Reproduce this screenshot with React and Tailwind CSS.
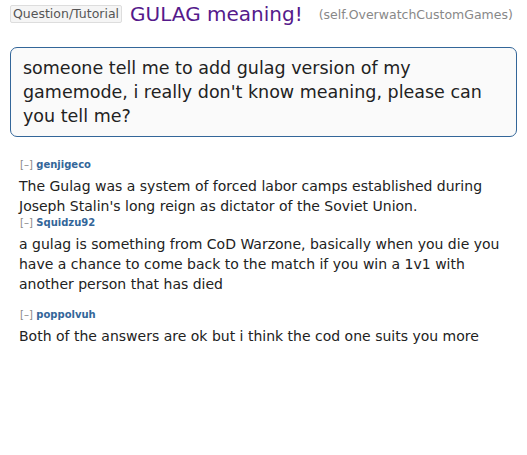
const FONT = { fontFamily: '"DejaVu Sans", Verdana, sans-serif' };

const comments = [
  {
    author: "genjigeco",
    body: "The Gulag was a system of forced labor camps established during Joseph Stalin's long reign as dictator of the Soviet Union.",
    gap: "mb-0",
  },
  {
    author: "Squidzu92",
    body: "a gulag is something from CoD Warzone, basically when you die you have a chance to come back to the match if you win a 1v1 with another person that has died",
    gap: "mb-[14px]",
  },
  {
    author: "poppolvuh",
    body: "Both of the answers are ok but i think the cod one suits you more",
    gap: "mb-0",
  },
];

function Comment({ author, body, gap }) {
  return (
    <div className={`pl-[20px] pr-[24px] ${gap}`}>
      <div className="text-[10px] leading-[14px] font-bold">
        <span className="text-[#888] font-normal">[–]</span>{" "}
        <span className="text-[#369]">{author}</span>
      </div>
      <p className="mt-[4px] text-[14px] leading-[20px] text-[#222] -ml-[1px]">{body}</p>
    </div>
  );
}

export default function App() {
  return (
    <div className="w-[527px] h-[455px] bg-white" style={FONT}>
      <div className="flex items-center pl-[10px] pt-[4px] h-[24px]">
        <span className="text-[12.5px] leading-[14px] px-[2px] py-[1px] border border-[#ddd] bg-[#f5f5f5] text-[#555] rounded-[2px]">
          Question/Tutorial
        </span>
        <span className="ml-[8px] text-[20px] leading-[22px] text-[#551a8b]">GULAG meaning!</span>
        <span className="ml-[16px] mt-[2px] text-[12.5px] text-[#888]">(self.OverwatchCustomGames)</span>
      </div>

      <div className="mx-[10px] mt-[23px] border border-[#369] rounded-[7px] bg-[#fafafa] pl-[12px] pr-[30px] pt-[8px] pb-[8px]">
        <p className="text-[17.5px] leading-[24px] text-[#222]">
          someone tell me to add gulag version of my gamemode, i really don't know meaning, please can you tell me?
        </p>
      </div>

      <div className="mt-[21px]">
        {comments.map((c) => (
          <Comment key={c.author} {...c} />
        ))}
      </div>
    </div>
  );
}
